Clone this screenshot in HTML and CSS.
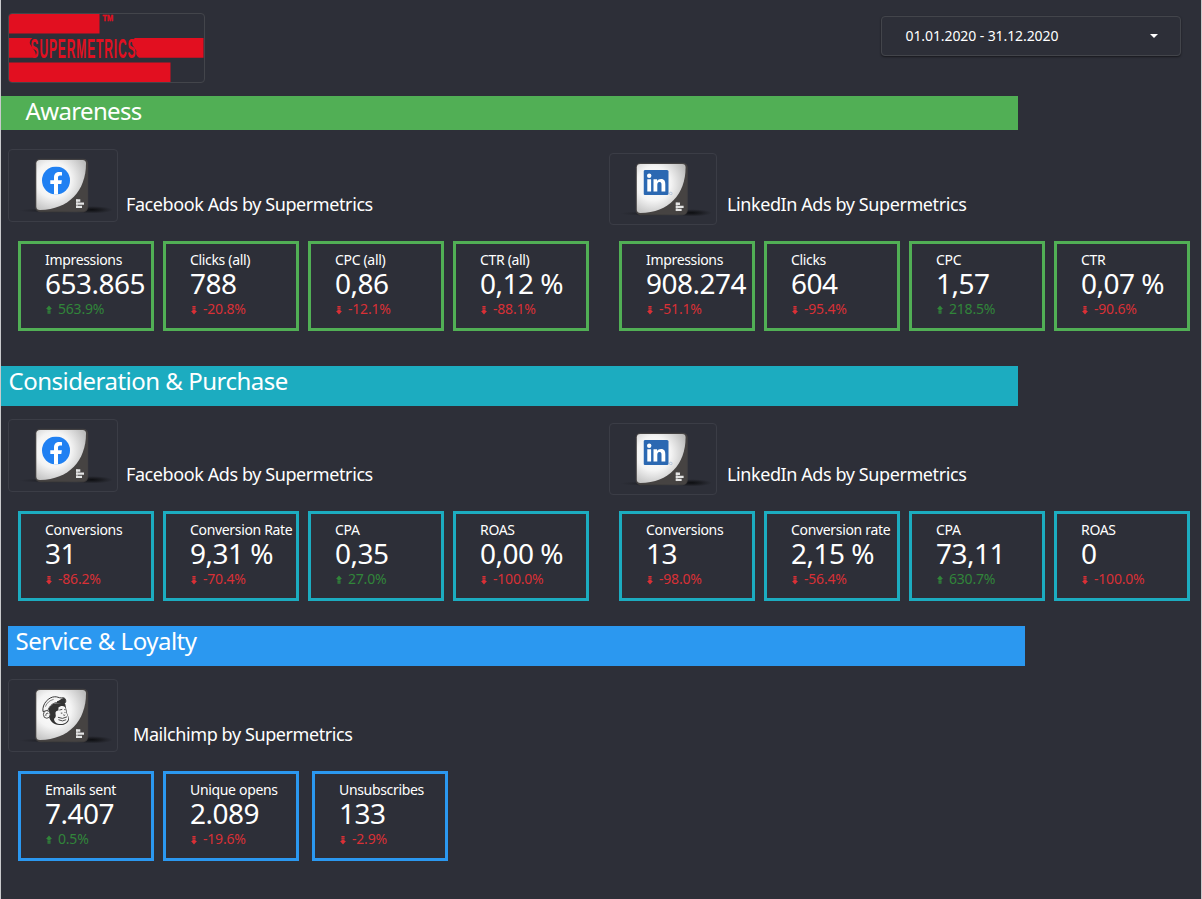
FILE: index.html
```html
<!DOCTYPE html>
<html lang="en">
<head>
    <meta charset="UTF-8">
    <meta name="viewport" content="width=device-width, initial-scale=1.0">
    <title>Marketing funnel dashboard</title>
    <link rel="stylesheet" href="styles.css">
</head>
<body>
    <svg class="sprite" width="0" height="0">
        <defs>
            <radialGradient id="shine" cx=".35" cy=".4" r=".7">
                <stop offset="0" stop-color="#fff"/>
                <stop offset=".5" stop-color="#f4f4f4"/>
                <stop offset="1" stop-color="#bcbcbc"/>
            </radialGradient>
            <radialGradient id="floor">
                <stop offset="0" stop-color="#0c0d10"/>
                <stop offset=".5" stop-color="#16171b" stop-opacity=".7"/>
                <stop offset="1" stop-color="#1c1d22" stop-opacity="0"/>
            </radialGradient>
            <symbol id="tile" viewBox="0 0 108 71">
                <ellipse cx="45" cy="60.500" rx="35" ry="2.500" fill="url(#floor)" opacity=".6"/>
                <ellipse cx="83" cy="59.800" rx="21" ry="3.800" fill="url(#floor)"/>
                <rect x="26.200" y="8.700" width="53" height="53.500" rx="5" fill="#55504d" opacity=".55"/>
                <rect x="27.200" y="9.800" width="51" height="51.500" rx="4" fill="#464342"/>
                <path d="M31 10 H73.500 Q77 10 77 13.500 C77 40.500 60 59.500 31 60 Q27.300 60 27.300 56.500 V13.500 Q27.300 10 31 10 Z" fill="url(#shine)"/>
                <path d="M67 49.200 h4.300 v2.500 h-4.300 z M67 52.500 h8 v2.300 h-8 z M67 55.700 h6 v2.300 h-6 z" fill="#e4e4e4"/>
                <path d="M67 49.200 h2 v8.800 h-2 z" fill="#e4e4e4" opacity=".5"/>
            </symbol>
            <symbol id="facebook" viewBox="0 0 28 28">
                <circle cx="14" cy="14" r="14" fill="#2080f2"/>
                <path d="M12 28 V17.500 H8.300 V13.700 H12 V11 C12 7.300 14.200 5.500 17.300 5.500 C18.700 5.500 20 5.700 20 5.700 V9 H18 C16.400 9 16 10 16 11.200 V13.700 H19.900 L19.300 17.500 H16 V28 Z" fill="#fff"/>
            </symbol>
            <symbol id="linkedin" viewBox="0 0 30 25">
                <rect width="25" height="25" rx="1.500" fill="#2b68b2"/>
                <circle cx="5.700" cy="5.800" r="2.200" fill="#fff"/>
                <path d="M3.800 9.300 h3.800 v12.200 h-3.800 z M10 9.300 h3.600 v1.700 c.7-1.200 2-2 3.900-2 c3.600 0 4.300 2.400 4.300 5.500 v7 h-3.800 v-6.200 c0-1.500 0-3.200-2-3.200 c-1.900 0-2.200 1.500-2.200 3.100 v6.300 H10 z" fill="#fff"/>
                <circle cx="27.300" cy="23.500" r="1.300" fill="none" stroke="#9ab4d4" stroke-width=".6"/>
            </symbol>
            <symbol id="mailchimp" viewBox="0 0 29 31">
                <path d="M7 14 C8 9 13 7 18 7.500 L24 8 L25 13 L26 18 L28 23 C28 28 23 30.500 18 30 C12 30 8.500 26 7 21 Z" fill="#333"/>
                <path d="M17 12 C19 9.500 24.500 9.500 24.500 13.500 L25.300 17.500 L27.300 22.500 C27.300 26 24 29 19.500 29 C15 29 12.300 26.500 12.500 23.500 C14.500 22 14.500 20 14 18.500 C13.500 16 15.500 15 17 15 Z" fill="#f5f5f5"/>
                <path d="M1 16 C0 8 7 1 13 .8 C16 .5 17 2 20 2 C23 1 25 3 24.500 6 C24 8 21 8.500 19 7 C14 6 9 8 6.500 14 L5 15.500 Z" fill="#f5f5f5" stroke="#333" stroke-width="1"/>
                <path d="M15.500 5.500 C18 5 19.500 2.500 22 2 C25 2.500 25.300 6 23 8.300 C20 9 18 7.500 15.500 7 Z" fill="#333"/>
                <path d="M3.500 11 C5 7 8 4.500 12 3.500" fill="none" stroke="#333" stroke-width=".6"/>
                <ellipse cx="5" cy="19" rx="3.500" ry="4" fill="#f5f5f5" stroke="#333" stroke-width=".9"/>
                <path d="M4 20.500 Q4 17 6.500 18 M18 14.500 l3-.7 M23 14 l1.500 .3 M19.500 17.700 h1.600 M23.300 17 h1 M22 19.500 q1 1 2 0 M16.500 22 Q21 24.500 26 21.500 M17 24.500 Q21.500 27 25 24.500" fill="none" stroke="#333" stroke-width=".9"/>
            </symbol>
            <symbol id="up" viewBox="0 0 8 10">
                <path d="M4 .5 L7 4 H1 Z M2.500 4 h3 v1 h-3 z M2.500 5.700 h3 v1 h-3 z M2.500 7.400 h3 v1.200 h-3 z" fill="currentColor"/>
                <path d="M2.500 4 h3 v4.600 h-3 z" fill="currentColor" opacity=".5"/>
            </symbol>
            <symbol id="down" viewBox="0 0 8 10">
                <path d="M4 9.500 L7 6 H1 Z M2.500 5 h3 v1 h-3 z M2.500 3.200 h3 v1 h-3 z M2.500 1 h3 v1.300 h-3 z" fill="currentColor"/>
                <path d="M2.500 1 h3 v5 h-3 z" fill="currentColor" opacity=".5"/>
            </symbol>
        </defs>
    </svg>

    <header class="header">
        <div class="logo">
            <svg width="195" height="68" viewBox="0 0 195 68">
                <g fill="#e20f20">
                    <rect width="90.500" height="19.500"/>
                    <path d="M0 24 H23.500 Q20 26.500 21 30 L25 36 Q28.500 41 25.500 43.700 H0 Z"/>
                    <path d="M126 24 H194.500 V43.700 H130 Q126 41 127.500 37 L123.500 31 Q122 26 126 24 Z"/>
                    <rect y="48.500" width="161.500" height="19.500"/>
                    <text class="logo-name" x="21.500" y="43.700" textLength="106" lengthAdjust="spacingAndGlyphs">SUPERMETRICS</text>
                    <text class="logo-tm" x="93.500" y="7.200" textLength="10.500" lengthAdjust="spacingAndGlyphs">TM</text>
                </g>
            </svg>
        </div>
        <div class="date-range">
            <span>01.01.2020 - 31.12.2020</span>
            <i class="caret"></i>
        </div>
    </header>

    <main>
        <section class="stage awareness">
            <h2 class="stage-title">Awareness</h2>
            <div class="channels">
                <article class="channel">
                    <div class="source">
                        <div class="source-icon">
                            <svg width="108" height="71"><use href="#tile"/><use href="#facebook" x="33" y="16.500" width="28" height="28"/></svg>
                        </div>
                        <h3 class="source-name">Facebook Ads by Supermetrics</h3>
                    </div>
                    <div class="cards">
                        <div class="card"><p class="label">Impressions</p><p class="value">653.865</p><p class="delta up"><svg><use href="#up"/></svg>563.9%</p></div>
                        <div class="card"><p class="label">Clicks (all)</p><p class="value">788</p><p class="delta down"><svg><use href="#down"/></svg>-20.8%</p></div>
                        <div class="card"><p class="label">CPC (all)</p><p class="value">0,86</p><p class="delta down"><svg><use href="#down"/></svg>-12.1%</p></div>
                        <div class="card"><p class="label">CTR (all)</p><p class="value">0,12 %</p><p class="delta down"><svg><use href="#down"/></svg>-88.1%</p></div>
                    </div>
                </article>
                <article class="channel">
                    <div class="source">
                        <div class="source-icon small">
                            <svg width="106" height="70"><use href="#tile"/><use href="#linkedin" x="33.500" y="16" width="30" height="25"/></svg>
                        </div>
                        <h3 class="source-name">LinkedIn Ads by Supermetrics</h3>
                    </div>
                    <div class="cards">
                        <div class="card"><p class="label">Impressions</p><p class="value">908.274</p><p class="delta down"><svg><use href="#down"/></svg>-51.1%</p></div>
                        <div class="card"><p class="label">Clicks</p><p class="value">604</p><p class="delta down"><svg><use href="#down"/></svg>-95.4%</p></div>
                        <div class="card"><p class="label">CPC</p><p class="value">1,57</p><p class="delta up"><svg><use href="#up"/></svg>218.5%</p></div>
                        <div class="card"><p class="label">CTR</p><p class="value">0,07 %</p><p class="delta down"><svg><use href="#down"/></svg>-90.6%</p></div>
                    </div>
                </article>
            </div>
        </section>

        <section class="stage consideration">
            <h2 class="stage-title">Consideration &amp; Purchase</h2>
            <div class="channels">
                <article class="channel">
                    <div class="source">
                        <div class="source-icon">
                            <svg width="108" height="71"><use href="#tile"/><use href="#facebook" x="33" y="16.500" width="28" height="28"/></svg>
                        </div>
                        <h3 class="source-name">Facebook Ads by Supermetrics</h3>
                    </div>
                    <div class="cards">
                        <div class="card"><p class="label">Conversions</p><p class="value">31</p><p class="delta down"><svg><use href="#down"/></svg>-86.2%</p></div>
                        <div class="card"><p class="label">Conversion Rate</p><p class="value">9,31 %</p><p class="delta down"><svg><use href="#down"/></svg>-70.4%</p></div>
                        <div class="card"><p class="label">CPA</p><p class="value">0,35</p><p class="delta up"><svg><use href="#up"/></svg>27.0%</p></div>
                        <div class="card"><p class="label">ROAS</p><p class="value">0,00 %</p><p class="delta down"><svg><use href="#down"/></svg>-100.0%</p></div>
                    </div>
                </article>
                <article class="channel">
                    <div class="source">
                        <div class="source-icon small">
                            <svg width="106" height="70"><use href="#tile"/><use href="#linkedin" x="33.500" y="16" width="30" height="25"/></svg>
                        </div>
                        <h3 class="source-name">LinkedIn Ads by Supermetrics</h3>
                    </div>
                    <div class="cards">
                        <div class="card"><p class="label">Conversions</p><p class="value">13</p><p class="delta down"><svg><use href="#down"/></svg>-98.0%</p></div>
                        <div class="card"><p class="label">Conversion rate</p><p class="value">2,15 %</p><p class="delta down"><svg><use href="#down"/></svg>-56.4%</p></div>
                        <div class="card"><p class="label">CPA</p><p class="value">73,11</p><p class="delta up"><svg><use href="#up"/></svg>630.7%</p></div>
                        <div class="card"><p class="label">ROAS</p><p class="value">0</p><p class="delta down"><svg><use href="#down"/></svg>-100.0%</p></div>
                    </div>
                </article>
            </div>
        </section>

        <section class="stage loyalty">
            <h2 class="stage-title">Service &amp; Loyalty</h2>
            <div class="channels">
                <article class="channel">
                    <div class="source">
                        <div class="source-icon">
                            <svg width="108" height="71"><use href="#tile"/><use href="#mailchimp" x="32.500" y="16" width="29" height="30"/></svg>
                        </div>
                        <h3 class="source-name">Mailchimp by Supermetrics</h3>
                    </div>
                    <div class="cards">
                        <div class="card"><p class="label">Emails sent</p><p class="value">7.407</p><p class="delta up"><svg><use href="#up"/></svg>0.5%</p></div>
                        <div class="card"><p class="label">Unique opens</p><p class="value">2.089</p><p class="delta down"><svg><use href="#down"/></svg>-19.6%</p></div>
                        <div class="card last"><p class="label">Unsubscribes</p><p class="value">133</p><p class="delta down"><svg><use href="#down"/></svg>-2.9%</p></div>
                    </div>
                </article>
            </div>
        </section>
    </main>
</body>
</html>
```
FILE: styles.css
```css
html {
    box-sizing: border-box;
    font-family: "Noto Sans", sans-serif;
    font-size: 14px;
}

*,
*:before,
*:after {
    box-sizing: inherit;
}

body {
    margin: 0;
    height: 899px;
    overflow: hidden;
    color: #fff;
    background-color: #2d2f38;
    border-left: 1px solid #c9cacc;
    border-right: 1px solid #c9cacc;
}

h2,
h3,
p {
    margin: 0;
    font-weight: 400;
    white-space: nowrap;
}

svg {
    display: block;
}

.sprite {
    position: absolute;
}

.header {
    height: 96px;
    padding: 13px 20px 0 7px;
    display: flex;
    justify-content: space-between;
    align-items: flex-start;
}

.logo {
    width: 197px;
    height: 70px;
    border: 1px solid #43454b;
    border-radius: 4px;
    overflow: hidden;
}

.logo-name {
    font-family: "Liberation Sans Narrow", "Liberation Sans", sans-serif;
    font-size: 27px;
    font-weight: 700;
    letter-spacing: 2px;
}

.logo-tm {
    font-family: "Liberation Sans", sans-serif;
    font-size: 9.5px;
    font-weight: 700;
    stroke: #e20f20;
    stroke-width: .4px;
}

.date-range {
    width: 300px;
    height: 40px;
    margin-top: 3px;
    padding: 0 22px 2px 23.5px;
    display: flex;
    justify-content: space-between;
    align-items: center;
    letter-spacing: -.09px;
    border: 1px solid #43454b;
    border-radius: 4px;
    box-shadow: 0 1px 2px rgba(0, 0, 0, .5);
}

.caret {
    margin-top: 2px;
    border: 4px solid transparent;
    border-top-color: #fff;
    border-bottom: 0;
}

.stage {
    height: 260px;
}

.stage-title {
    width: 1017px;
    height: 40px;
    margin-bottom: 13px;
    padding-left: 7.5px;
    font-size: 24px;
    letter-spacing: -.5px;
    line-height: 30px;
    background-color: var(--color);
}

.awareness {
    --color: #51af55;
    height: 270px;
}

.awareness .stage-title {
    height: 34px;
    margin-bottom: 19px;
    padding-left: 24.5px;
    letter-spacing: -.65px;
}

.consideration {
    --color: #1cacc0;
}

.loyalty {
    --color: #2b98f0;
}

.loyalty .stage-title {
    margin-left: 7px;
}

.channels {
    display: grid;
    grid-template-columns: 601px 1fr;
}

.source {
    height: 92px;
    padding-left: 7px;
    display: flex;
    align-items: flex-start;
}

.source-icon {
    width: 110px;
    height: 73px;
    margin-right: 8px;
    border: 1px solid #3b3d46;
    border-radius: 4px;
}

.source-icon.small {
    width: 108px;
    height: 72px;
    margin: 4px 10px 0 0;
}

.source-name {
    margin-top: 43px;
    font-size: 18px;
    letter-spacing: -.41px;
    line-height: 24px;
}

.loyalty .source-name {
    margin-left: 7px;
}

.cards {
    padding-left: 17px;
    display: flex;
    gap: 9px;
}

.card {
    width: 136px;
    height: 90px;
    padding: 7px 0 0 24px;
    border: 3px solid var(--color);
}

.card.last {
    margin-left: 4px;
}

.label {
    letter-spacing: -.33px;
    line-height: 18px;
}

.value {
    font-size: 28px;
    letter-spacing: -.5px;
    line-height: 28px;
}

.delta {
    display: flex;
    align-items: center;
    letter-spacing: -.2px;
    line-height: 20px;
    margin-top: 2px;
}

.delta svg {
    width: 8px;
    height: 10px;
    margin: 2px 5px 0 0;
}

.up {
    color: #31853a;
}

.down {
    color: #d93036;
}
```
